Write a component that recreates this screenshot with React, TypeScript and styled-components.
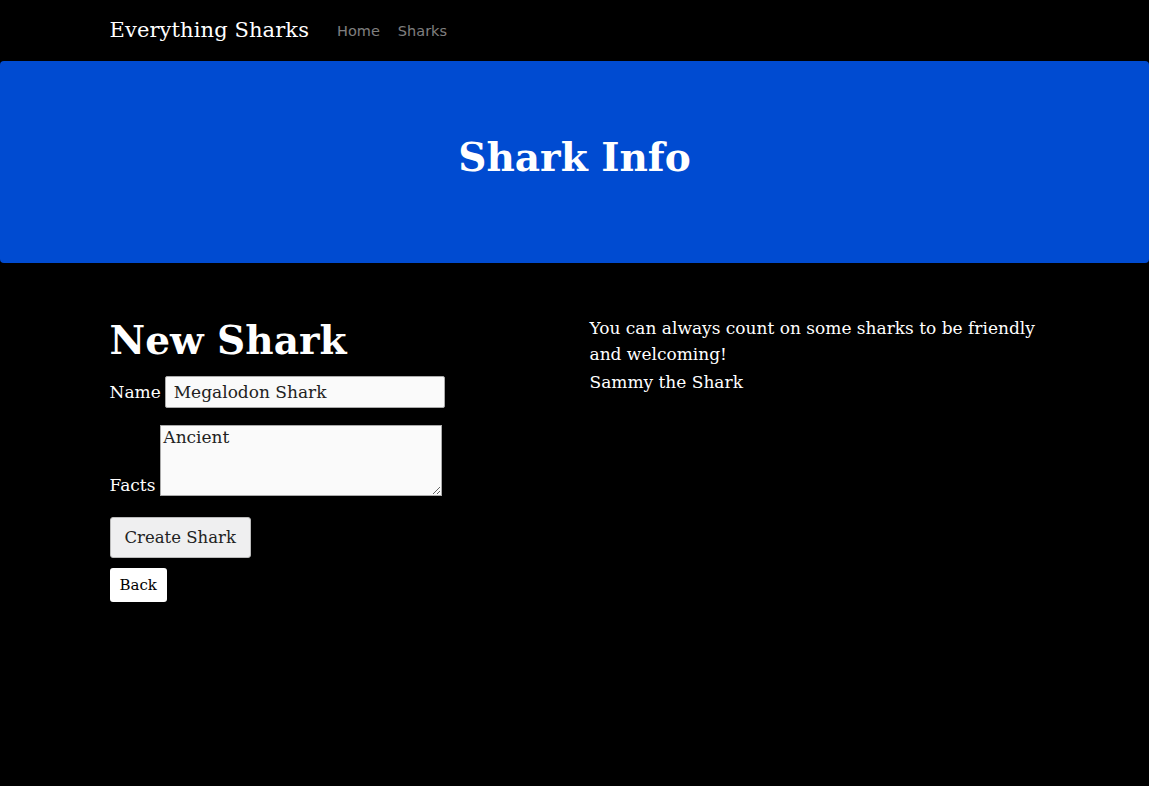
import React from "react";
import styled, { createGlobalStyle } from "styled-components";

const Global = createGlobalStyle`
  html, body { margin: 0; padding: 0; background: #000; }
  body {
    font-family: "DejaVu Serif", "Liberation Serif", serif;
    color: #fff;
    font-size: 17px;
    line-height: 1.6;
  }
  * { box-sizing: border-box; }
`;

const Page = styled.div`
  min-height: 786px;
  background: #000;
`;

const Nav = styled.nav`
  height: 61px;
  display: flex;
  align-items: center;
`;

const Container = styled.div`
  width: 960px;
  margin: 0 auto;
  padding: 0 15px;
`;

const NavInner = styled(Container)`
  display: flex;
  align-items: center;
`;

const Brand = styled.a`
  font-size: 21px;
  color: #fff;
  text-decoration: none;
  margin-right: 28px;
  line-height: 1.5;
  letter-spacing: 0.1px;
`;

const NavLink = styled.a`
  font-family: "DejaVu Sans", "Open Sans", sans-serif;
  font-size: 14.5px;
  color: rgba(255, 255, 255, 0.5);
  text-decoration: none;
  margin-right: 18px;
  padding-top: 2px;
`;

const Jumbo = styled.header`
  background: #004bd1;
  border-radius: 4px;
  height: 202px;
  display: flex;
  align-items: center;
  justify-content: center;
  padding-bottom: 10px;
`;

const JumboTitle = styled.h1`
  margin: 0;
  font-size: 39px;
  font-weight: 700;
  line-height: 1.2;
`;

const Row = styled(Container)`
  display: grid;
  grid-template-columns: 480px 480px;
  padding: 52px 0 0;
`;

const Col = styled.div`
  padding: 0 15px;
`;

const Title = styled.h1`
  margin: 2px 0 12px;
  font-size: 39px;
  font-weight: 700;
  line-height: 1.2;
`;

const Field = styled.div<{ $align?: string; $gap?: number }>`
  display: flex;
  align-items: ${(p) => p.$align || "flex-end"};
  gap: ${(p) => p.$gap ?? 5}px;
`;

const Label = styled.label`
  font-size: 17px;
  line-height: 1.2;
`;

const TextInput = styled.input`
  width: 280px;
  height: 32px;
  background: #fafafa;
  border: 1px solid #aaa;
  border-radius: 2px;
  font-family: inherit;
  font-size: 17px;
  color: #222;
  padding: 0 8px;
`;

const TextArea = styled.textarea`
  width: 282px;
  height: 71px;
  background: #fafafa;
  border: 1px solid #aaa;
  border-radius: 0;
  font-family: inherit;
  font-size: 17px;
  color: #222;
  padding: 1px 2px;
  margin: 0;
  display: block;
  resize: both;
`;

const FieldGroup = styled.div`
  display: flex;
  flex-direction: column;
  gap: 17px;
`;

const Button = styled.button<{ $variant?: "primary" | "plain" }>`
  font-family: inherit;
  display: block;
  color: #222;
  cursor: pointer;
  ${(p) =>
    p.$variant === "plain"
      ? `
    background: #fff;
    border: none;
    border-radius: 3px;
    font-size: 15px;
    height: 34px;
    padding: 0 10px;
    color: #000;
  `
      : `
    background: #efeff0;
    border: 1px solid #bbb;
    border-radius: 3px;
    font-size: 16.5px;
    height: 41px;
    padding: 0 14px;
  `}
`;

const Stack = styled.div`
  display: flex;
  flex-direction: column;
  align-items: flex-start;
  gap: 10px;
  margin-top: 21px;
`;

const Copy = styled.p`
  margin: 0;
  font-size: 17px;
  line-height: 26px;
  max-width: 450px;
`;

const Sign = styled.p`
  margin: 2px 0 0;
  font-size: 17px;
  line-height: 26px;
`;

export default function App() {
  return (
    <Page>
      <Global />
      <Nav>
        <NavInner>
          <Brand href="#">Everything Sharks</Brand>
          <NavLink href="#">Home</NavLink>
          <NavLink href="#">Sharks</NavLink>
        </NavInner>
      </Nav>
      <Jumbo>
        <JumboTitle>Shark Info</JumboTitle>
      </Jumbo>
      <Row>
        <Col>
          <Title>New Shark</Title>
          <form onSubmit={(e) => e.preventDefault()}>
            <FieldGroup>
              <Field $align="center" $gap={4}>
                <Label>Name</Label>
                <TextInput defaultValue="Megalodon Shark" />
              </Field>
              <Field>
                <Label>Facts</Label>
                <TextArea defaultValue="Ancient" />
              </Field>
            </FieldGroup>
            <Stack>
              <Button type="submit">Create Shark</Button>
              <Button type="button" $variant="plain">Back</Button>
            </Stack>
          </form>
        </Col>
        <Col>
          <Copy>You can always count on some sharks to be friendly and welcoming!</Copy>
          <Sign>Sammy the Shark</Sign>
        </Col>
      </Row>
    </Page>
  );
}
